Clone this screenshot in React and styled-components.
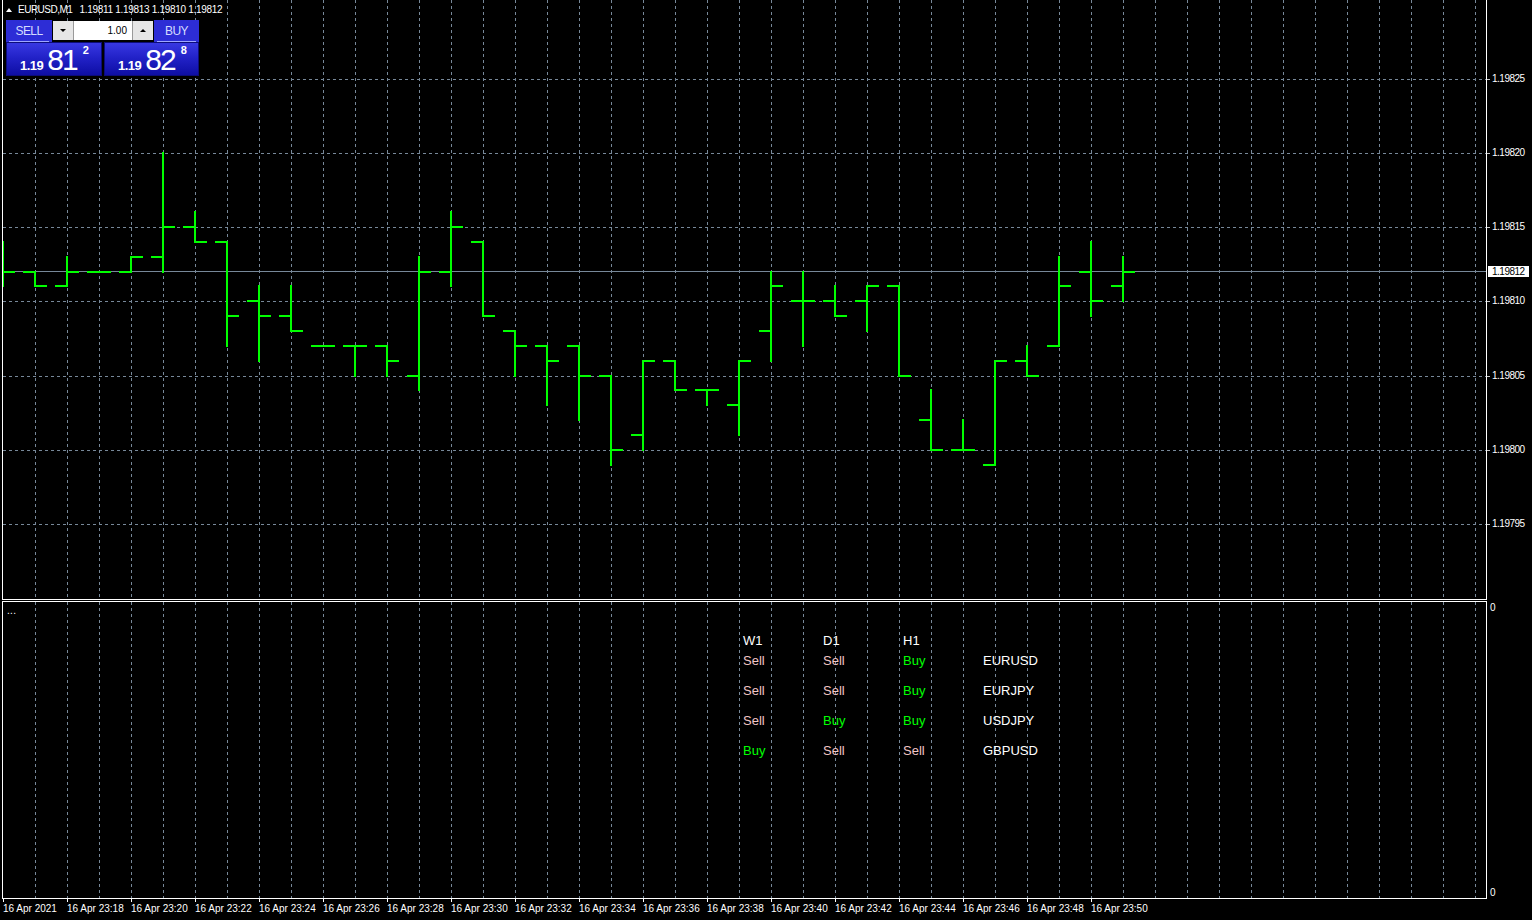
import React from "react";
import styled, { createGlobalStyle } from "styled-components";

const GlobalStyle = createGlobalStyle`
  html, body { margin: 0; padding: 0; background: #000; }
  body {
    font-family: "Liberation Sans", Arial, sans-serif;
    color: #fff;
    overflow: hidden;
  }
  * { box-sizing: border-box; }
`;

const GRID = "#778899";
const BAR = "#00ff00";
const PLOT_W = 1483;
const MAIN_H = 599;
const SUB_H = 296;
const STEP = 32;

const py = (n) => 301.3 - n * 14.85;
const ry = (n) => Math.round(py(n));

// [open, high, low, close] in points relative to 1.19810
const BARS = [
  [2, 4, 1, 2], [2, 2, 1, 1], [1, 3, 1, 2], [2, 2, 2, 2], [2, 3, 2, 3],
  [3, 10, 2, 5], [5, 6, 4, 4], [4, 4, -3, -1], [0, 1, -4, -1], [-1, 1, -2, -2],
  [-3, -3, -3, -3], [-3, -3, -5, -3], [-3, -3, -5, -4], [-5, 3, -6, 2], [2, 6, 1, 5],
  [4, 4, -1, -1], [-2, -2, -5, -3], [-3, -3, -7, -4], [-3, -3, -8, -5], [-5, -5, -11, -10],
  [-9, -4, -10, -4], [-4, -4, -6, -6], [-6, -6, -7, -6], [-7, -4, -9, -4], [-2, 2, -4, 1],
  [0, 2, -3, 0], [0, 1, -1, -1], [0, 1, -2, 1], [1, 1, -5, -5], [-8, -6, -10, -10],
  [-10, -8, -10, -10], [-11, -4, -11, -4], [-4, -3, -5, -5], [-3, 3, -3, 1], [2, 4, -1, 0],
  [1, 3, 0, 2],
];

const LEVELS = [15, 10, 5, 0, -5, -10, -15];
const VLINES = Array.from({ length: 46 }, (_, k) => (k + 1) * STEP);
const fmt = (n) => (1.1981 + n * 0.00001).toFixed(5);

const TIMES = ["16 Apr 2021"].concat(
  Array.from({ length: 17 }, (_, i) => `16 Apr 23:${String(18 + i * 2).padStart(2, "0")}`)
);

const SIGNALS = [
  { sym: "EURUSD", w1: "Sell", d1: "Sell", h1: "Buy" },
  { sym: "EURJPY", w1: "Sell", d1: "Sell", h1: "Buy" },
  { sym: "USDJPY", w1: "Sell", d1: "Buy", h1: "Buy" },
  { sym: "GBPUSD", w1: "Buy", d1: "Sell", h1: "Sell" },
];

/* ---------- layout ---------- */

const Root = styled.div`
  width: 1532px;
  height: 920px;
  padding-left: 2px;
  display: flex;
  flex-direction: column;
  background: #000;
`;

const PaneRow = styled.div`
  display: flex;
  height: ${(p) => p.$h}px;
  margin-top: ${(p) => p.$gap || 0}px;
`;

const Plot = styled.div`
  position: relative;
  width: 1485px;
  height: 100%;
  border-left: 1px solid #fff;
  border-right: 1px solid #fff;
  border-bottom: 1px solid #fff;
  border-top: ${(p) => (p.$top ? "1px solid #fff" : "none")};
  overflow: hidden;
`;

const ChartSvg = styled.svg`
  position: absolute;
  left: 0;
  top: 0;
  display: block;
  shape-rendering: crispEdges;
`;

const Overlay = styled.div`
  position: relative;
  z-index: 1;
  padding-left: 3px;
`;

/* ---------- title ---------- */

const Title = styled.div`
  display: flex;
  align-items: center;
  height: 12px;
  margin-top: 4px;
  font-size: 10px;
  line-height: 12px;
  white-space: nowrap;
`;

const UpTriangle = styled.span`
  width: 0;
  height: 0;
  border-left: 3px solid transparent;
  border-right: 3px solid transparent;
  border-bottom: 4px solid #fff;
  margin-right: 6px;
`;

const SymbolName = styled.span`
  letter-spacing: -0.5px;
`;

const Quotes = styled.span`
  margin-left: 7px;
  letter-spacing: -0.3px;
`;

/* ---------- trade panel ---------- */

const TradePanel = styled.div`
  margin-top: 4px;
  width: 193px;
  display: flex;
  flex-direction: column;
`;

const PanelRow = styled.div`
  display: flex;
  gap: ${(p) => p.$gap}px;
  height: ${(p) => p.$h}px;
`;

const SideButton = styled.div`
  width: ${(p) => p.$w}px;
  height: 22px;
  padding: 0 3px;
  background: #2d2dd6;
  display: flex;
`;

const SideLabel = styled.div`
  flex: 1;
  display: flex;
  align-items: center;
  justify-content: center;
  border-bottom: 1px solid #9ea6ff;
  color: #d4dcff;
  font-size: 12px;
  letter-spacing: -0.6px;
  padding-top: 1px;
`;

const LotGroup = styled.div`
  width: 100px;
  height: 19px;
  margin-top: 1px;
  display: flex;
  gap: 1px;
  background: #9a9a9a;
`;

const ArrowBtn = styled.div`
  width: 20px;
  display: flex;
  align-items: center;
  justify-content: center;
  background: #e6e6e6;
`;

const ArrowDown = styled.span`
  width: 0;
  height: 0;
  border-left: 3px solid transparent;
  border-right: 3px solid transparent;
  border-top: 3px solid #000;
`;

const ArrowUp = styled.span`
  width: 0;
  height: 0;
  border-left: 3px solid transparent;
  border-right: 3px solid transparent;
  border-bottom: 3px solid #000;
`;

const LotInput = styled.div`
  flex: 1;
  background: #fff;
  color: #000;
  font-size: 10px;
  display: flex;
  align-items: center;
  justify-content: flex-end;
  padding-right: 5px;
`;

const PriceBox = styled.div`
  width: ${(p) => p.$w}px;
  height: 34px;
  border: 1px solid #0c0c7a;
  background: linear-gradient(to bottom, #3838e2 0%, #2222c8 45%, #0e0ea4 100%);
  display: flex;
  align-items: baseline;
  padding: 2px 0 0 13px;
  color: #fff;
`;

const PriceSmall = styled.span`
  font-size: 13px;
  font-weight: bold;
  letter-spacing: -0.5px;
  line-height: 30px;
`;

const PriceBig = styled.span`
  font-size: 30px;
  line-height: 30px;
  letter-spacing: -2px;
  margin-left: 4px;
`;

const PriceSup = styled.span`
  align-self: flex-start;
  font-size: 11px;
  font-weight: bold;
  line-height: 11px;
  margin-left: 6px;
`;

/* ---------- price axis ---------- */

const PriceAxis = styled.div`
  position: relative;
  flex: 1;
  font-size: 10px;
  line-height: 12px;
`;

const AxisLabel = styled.div`
  position: absolute;
  left: 0;
  display: flex;
  align-items: center;
  white-space: nowrap;
  letter-spacing: -0.5px;
  &::before {
    content: "";
    width: 3px;
    height: 1px;
    background: #c8c8c8;
    margin-right: 2px;
  }
`;

const BidLabel = styled.div`
  position: absolute;
  left: 1px;
  width: 41px;
  height: 11px;
  background: #fff;
  color: #000;
  font-size: 10px;
  line-height: 11px;
  padding-left: 4px;
  letter-spacing: -0.5px;
`;

/* ---------- sub window ---------- */

const SubOverlay = styled.div`
  position: relative;
  z-index: 1;
  padding: 3px 0 0 4px;
`;

const ShortName = styled.div`
  font-size: 10px;
  line-height: 12px;
  letter-spacing: 0.3px;
`;

const SignalTable = styled.div`
  margin: 16px 0 0 736px;
  display: grid;
  grid-template-columns: repeat(4, 80px);
  grid-template-rows: 20px repeat(4, 30px);
  font-size: 13px;
  line-height: 15px;
`;

const Cell = styled.div`
  color: ${(p) => (p.$v === "Buy" ? "#00ff00" : p.$v === "Sell" ? "#f2c6c6" : "#ffffff")};
  white-space: nowrap;
`;

const SubAxis = styled.div`
  flex: 1;
  display: flex;
  flex-direction: column;
  justify-content: space-between;
  padding: 1px 0 0 3px;
  font-size: 10px;
  line-height: 12px;
`;

/* ---------- time axis ---------- */

const TimeAxis = styled.div`
  display: flex;
  padding-left: 1px;
  height: 21px;
  font-size: 10px;
  line-height: 12px;
`;

const TimeCell = styled.div`
  position: relative;
  width: 64px;
  flex: none;
  padding-top: 4px;
  white-space: nowrap;
  &::before {
    content: "";
    position: absolute;
    left: 0;
    top: 0;
    width: 1px;
    height: 3px;
    background: #fff;
  }
`;

/* ---------- drawings ---------- */

const MainChart = () => (
  <ChartSvg width={PLOT_W} height={MAIN_H} viewBox={`0 0 ${PLOT_W} ${MAIN_H}`}>
    {VLINES.map((x) => (
      <line key={x} x1={x + 0.5} y1={0} x2={x + 0.5} y2={MAIN_H} stroke={GRID} strokeDasharray="3 3" />
    ))}
    {LEVELS.map((n) => (
      <line key={n} x1={0} y1={ry(n) + 0.5} x2={PLOT_W} y2={ry(n) + 0.5} stroke={GRID} strokeDasharray="3 3" />
    ))}
    <line x1={0} y1={Math.floor(py(2)) + 0.5} x2={PLOT_W} y2={Math.floor(py(2)) + 0.5} stroke={GRID} />
    {BARS.map(([o, h, l, c], i) => {
      const x = i * STEP;
      return (
        <g key={i} fill={BAR}>
          <rect x={x - 1} y={ry(h) - 1} width={2} height={ry(l) - ry(h) + 2} />
          <rect x={x - 12} y={ry(o) - 1} width={12} height={2} />
          <rect x={x} y={ry(c) - 1} width={12} height={2} />
        </g>
      );
    })}
  </ChartSvg>
);

const SubGrid = () => (
  <ChartSvg width={PLOT_W} height={SUB_H} viewBox={`0 0 ${PLOT_W} ${SUB_H}`}>
    {VLINES.map((x) => (
      <line key={x} x1={x + 0.5} y1={0} x2={x + 0.5} y2={SUB_H} stroke={GRID} strokeDasharray="3 3" />
    ))}
  </ChartSvg>
);

export default function App() {
  return (
    <>
      <GlobalStyle />
      <Root>
        <PaneRow $h={600}>
          <Plot>
            <MainChart />
            <Overlay>
              <Title>
                <UpTriangle />
                <SymbolName>EURUSD,M1</SymbolName>
                <Quotes>1.19811 1.19813 1.19810 1.19812</Quotes>
              </Title>
              <TradePanel>
                <PanelRow $h={22} $gap={1}>
                  <SideButton $w={46}>
                    <SideLabel>SELL</SideLabel>
                  </SideButton>
                  <LotGroup>
                    <ArrowBtn><ArrowDown /></ArrowBtn>
                    <LotInput>1.00</LotInput>
                    <ArrowBtn><ArrowUp /></ArrowBtn>
                  </LotGroup>
                  <SideButton $w={45}>
                    <SideLabel>BUY</SideLabel>
                  </SideButton>
                </PanelRow>
                <PanelRow $h={34} $gap={2}>
                  <PriceBox $w={96}>
                    <PriceSmall>1.19</PriceSmall>
                    <PriceBig>81</PriceBig>
                    <PriceSup>2</PriceSup>
                  </PriceBox>
                  <PriceBox $w={95}>
                    <PriceSmall>1.19</PriceSmall>
                    <PriceBig>82</PriceBig>
                    <PriceSup>8</PriceSup>
                  </PriceBox>
                </PanelRow>
              </TradePanel>
            </Overlay>
          </Plot>
          <PriceAxis>
            {LEVELS.map((n) => (
              <AxisLabel key={n} style={{ top: ry(n) - 6 }}>{fmt(n)}</AxisLabel>
            ))}
            <BidLabel style={{ top: Math.floor(py(2)) - 5 }}>1.19812</BidLabel>
          </PriceAxis>
        </PaneRow>

        <PaneRow $h={298} $gap={1}>
          <Plot $top>
            <SubGrid />
            <SubOverlay>
              <ShortName>...</ShortName>
              <SignalTable>
                <Cell>W1</Cell>
                <Cell>D1</Cell>
                <Cell>H1</Cell>
                <Cell />
                {SIGNALS.map((s) => (
                  <React.Fragment key={s.sym}>
                    <Cell $v={s.w1}>{s.w1}</Cell>
                    <Cell $v={s.d1}>{s.d1}</Cell>
                    <Cell $v={s.h1}>{s.h1}</Cell>
                    <Cell>{s.sym}</Cell>
                  </React.Fragment>
                ))}
              </SignalTable>
            </SubOverlay>
          </Plot>
          <SubAxis>
            <span>0</span>
            <span>0</span>
          </SubAxis>
        </PaneRow>

        <TimeAxis>
          {TIMES.map((t) => (
            <TimeCell key={t}>{t}</TimeCell>
          ))}
        </TimeAxis>
      </Root>
    </>
  );
}
